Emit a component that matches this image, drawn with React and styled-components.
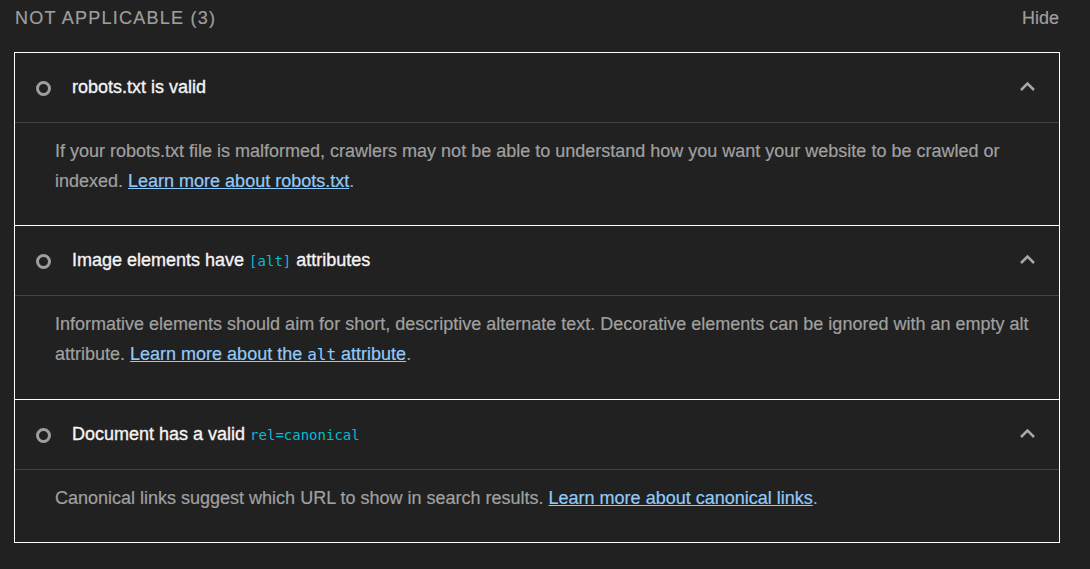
import React from "react";
import styled, { createGlobalStyle } from "styled-components";

const Global = createGlobalStyle`
  html, body {
    margin: 0;
    padding: 0;
    background: #212121;
  }
  body {
    font-family: "Liberation Sans", Arial, sans-serif;
  }
`;

const Page = styled.div`
  padding: 0 30px 0 14px;
  background: #212121;
  min-height: 569px;
  box-sizing: border-box;
`;

const GroupHeader = styled.div`
  display: flex;
  align-items: center;
  justify-content: space-between;
  height: 37px;
  margin-bottom: 15px;
  padding: 0 1px 0 1px;
`;

const GroupTitle = styled.div`
  font-size: 18px;
  letter-spacing: 1.25px;
  text-transform: uppercase;
  color: #9e9e9e;
  -webkit-text-stroke: 0.2px #9e9e9e;
`;

const HideButton = styled.button`
  background: none;
  border: none;
  padding: 0;
  font-family: inherit;
  font-size: 18px;
  color: #9e9e9e;
  -webkit-text-stroke: 0.2px #9e9e9e;
  cursor: pointer;
`;

const List = styled.div`
  border: 1px solid #ffffff;
`;

const Card = styled.div`
  & + & {
    border-top: 1px solid #ffffff;
  }
`;

const CardHeader = styled.div`
  display: flex;
  align-items: center;
  height: 69px;
  padding: 0 19px 0 21px;
  border-bottom: 1px solid #444444;
`;

const StatusRing = styled.span`
  width: 15px;
  height: 15px;
  box-sizing: border-box;
  border-radius: 50%;
  border: 3px solid #9e9e9e;
  flex: none;
  margin-top: 1px;
`;

const Title = styled.div`
  flex: 1;
  margin-left: 21px;
  font-size: 18px;
  color: #f3f3f3;
  -webkit-text-stroke: 0.35px #f3f3f3;
`;

const Code = styled.code`
  font-family: "DejaVu Sans Mono", "Liberation Mono", monospace;
  font-size: ${(p) => (p.$inLink ? "16px" : "14px")};
  color: ${(p) => (p.$inLink ? "inherit" : "#00bcd4")};
  -webkit-text-stroke: 0;
`;

const Chevron = styled.svg`
  width: 17px;
  height: 11px;
  flex: none;
  margin-right: 4px;
  margin-bottom: 3px;
`;

const Body = styled.div`
  padding: 13px 24px 29px 40px;
  font-size: 18px;
  line-height: 30px;
  color: #a0a0a0;
  -webkit-text-stroke: 0.2px #a0a0a0;
`;

const Link = styled.a`
  color: #90caf9;
  -webkit-text-stroke: 0.2px #90caf9;
  text-decoration: underline;
`;

function ChevronUp() {
  return (
    <Chevron viewBox="0 0 17 11">
      <path d="M2 9 L8.5 2.5 L15 9" fill="none" stroke="#a8a8a8" strokeWidth="2.5" />
    </Chevron>
  );
}

const audits = [
  {
    title: <>robots.txt is valid</>,
    body: (
      <>
        If your robots.txt file is malformed, crawlers may not be able to understand how you want your
        website to be crawled or indexed. <Link href="#">Learn more about robots.txt</Link>.
      </>
    ),
  },
  {
    title: (
      <>
        Image elements have <Code>[alt]</Code> attributes
      </>
    ),
    body: (
      <>
        Informative elements should aim for short, descriptive alternate text. Decorative elements can be
        ignored with an empty alt attribute.{" "}
        <Link href="#">
          Learn more about the <Code $inLink>alt</Code> attribute
        </Link>
        .
      </>
    ),
  },
  {
    title: (
      <>
        Document has a valid <Code>rel=canonical</Code>
      </>
    ),
    body: (
      <>
        Canonical links suggest which URL to show in search results.{" "}
        <Link href="#">Learn more about canonical links</Link>.
      </>
    ),
  },
];

export default function App() {
  return (
    <>
      <Global />
      <Page>
        <GroupHeader>
          <GroupTitle>Not applicable (3)</GroupTitle>
          <HideButton>Hide</HideButton>
        </GroupHeader>
        <List>
          {audits.map((a, i) => (
            <Card key={i}>
              <CardHeader>
                <StatusRing />
                <Title>{a.title}</Title>
                <ChevronUp />
              </CardHeader>
              <Body>{a.body}</Body>
            </Card>
          ))}
        </List>
      </Page>
    </>
  );
}
